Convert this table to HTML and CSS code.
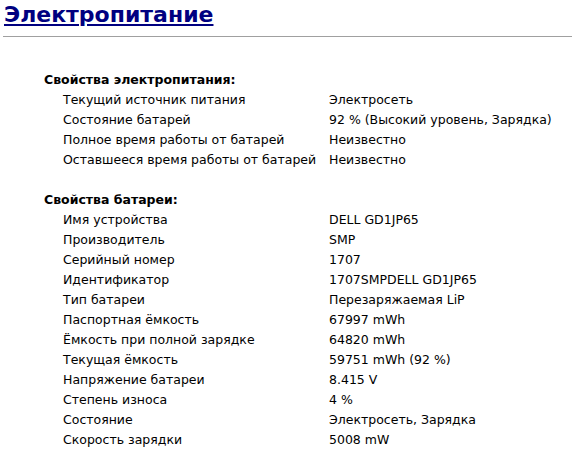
FILE: index.html
```html
<!DOCTYPE html>
<html lang="ru">
<head>
<meta charset="utf-8">
<link rel="stylesheet" href="styles.css">
</head>
<body>
<h1 class="title"><a href="#">Электропитание</a></h1>
<hr class="rule">
<div class="report">
  <div class="section">
    <div class="head">Свойства электропитания:</div>
    <div class="row"><span>Текущий источник питания</span><span>Электросеть</span></div>
    <div class="row"><span>Состояние батарей</span><span>92 % (Высокий уровень, Зарядка)</span></div>
    <div class="row"><span>Полное время работы от батарей</span><span>Неизвестно</span></div>
    <div class="row"><span>Оставшееся время работы от батарей</span><span>Неизвестно</span></div>
  </div>
  <div class="section">
    <div class="head">Свойства батареи:</div>
    <div class="row"><span>Имя устройства</span><span>DELL GD1JP65</span></div>
    <div class="row"><span>Производитель</span><span>SMP</span></div>
    <div class="row"><span>Серийный номер</span><span>1707</span></div>
    <div class="row"><span>Идентификатор</span><span>1707SMPDELL GD1JP65</span></div>
    <div class="row"><span>Тип батареи</span><span>Перезаряжаемая LiP</span></div>
    <div class="row"><span>Паспортная ёмкость</span><span>67997 mWh</span></div>
    <div class="row"><span>Ёмкость при полной зарядке</span><span>64820 mWh</span></div>
    <div class="row"><span>Текущая ёмкость</span><span>59751 mWh (92 %)</span></div>
    <div class="row"><span>Напряжение батареи</span><span>8.415 V</span></div>
    <div class="row"><span>Степень износа</span><span>4 %</span></div>
    <div class="row"><span>Состояние</span><span>Электросеть, Зарядка</span></div>
    <div class="row"><span>Скорость зарядки</span><span>5008 mW</span></div>
  </div>
</div>
</body>
</html>
```
FILE: styles.css
```css
html, body {
  margin: 0;
  padding: 0;
  background: #fff;
}
body {
  font-family: "DejaVu Sans", Verdana, sans-serif;
  font-size: 12.5px;
  color: #000;
}
.title {
  margin: 0;
  padding: 2px 0 0 4px;
  font-size: 22px;
  line-height: 26px;
  font-weight: bold;
}
.title a {
  color: #000080;
  text-decoration: underline;
}
.rule {
  margin: 8px 0 0 3px;
  border: 0;
  border-top: 1px solid #a0a0a0;
  height: 0;
}
.report {
  padding-top: 33px;
  display: flex;
  flex-direction: column;
  gap: 20px;
}
.section {
  display: flex;
  flex-direction: column;
}
.head {
  padding-left: 44px;
  font-weight: bold;
  line-height: 20px;
}
.row {
  display: grid;
  grid-template-columns: 266px auto;
  padding-left: 63px;
  line-height: 20px;
  white-space: nowrap;
}
```
